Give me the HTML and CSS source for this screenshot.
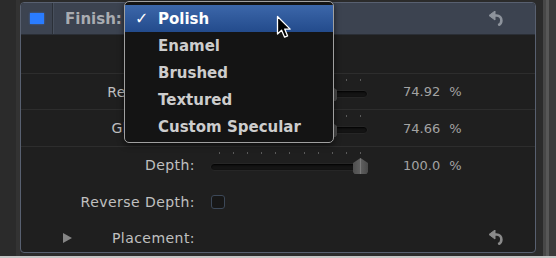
FILE: index.html
```html
<!DOCTYPE html>
<html>
<head>
<meta charset="utf-8">
<link rel="stylesheet" href="styles.css">
</head>
<body>
<div class="screen">
  <div class="main">
    <div class="gutter-l"></div>
    <div class="panel">
      <div class="header">
        <div class="swatch-cell"><span class="swatch"></span></div>
        <span class="title">Finish:</span>
        <svg class="reset reset-head" viewBox="0 0 14 15" width="14" height="15"><polygon points="0,4.5 6,0 6,9"/><path d="M5 4.5 H7.5 C10.5 4.5 12.4 6.6 12.4 9.4 C12.4 11.8 11.2 13.4 9.2 14.3"/></svg>
      </div>
      <div class="row row-empty line"></div>
      <div class="row row-36 line">
        <div class="label">Reflectivity:</div>
        <div class="slider"><div class="ticks"><i></i><i></i><i></i><i></i><i></i><i></i><i></i><i></i><i></i><i></i><i></i></div><div class="track"></div><div class="thumb" style="left: 112px"></div></div>
        <div class="value">74.92<span class="unit">%</span></div>
      </div>
      <div class="row row-37 line">
        <div class="label">Glossiness:</div>
        <div class="slider"><div class="ticks"><i></i><i></i><i></i><i></i><i></i><i></i><i></i><i></i><i></i><i></i><i></i></div><div class="track"></div><div class="thumb" style="left: 112px"></div></div>
        <div class="value">74.66<span class="unit">%</span></div>
      </div>
      <div class="row row-36">
        <div class="label">Depth:</div>
        <div class="slider"><div class="ticks"><i></i><i></i><i></i><i></i><i></i><i></i><i></i><i></i><i></i><i></i><i></i></div><div class="track"></div><div class="thumb" style="left: 143px"></div></div>
        <div class="value">100.0<span class="unit">%</span></div>
      </div>
      <div class="row row-37">
        <div class="label">Reverse Depth:</div>
        <div class="check-cell"><span class="checkbox"></span></div>
        <div></div>
      </div>
      <div class="row row-last">
        <div class="label label-disc"><span class="disc"></span><span>Placement:</span></div>
        <div></div>
        <div class="reset-cell"><svg class="reset" viewBox="0 0 14 15" width="14" height="15"><polygon points="0,4.5 6,0 6,9"/><path d="M5 4.5 H7.5 C10.5 4.5 12.4 6.6 12.4 9.4 C12.4 11.8 11.2 13.4 9.2 14.3"/></svg></div>
      </div>
    </div>
    <div class="gutter-r"><span class="s1"></span><span class="s2"></span><span class="s3"></span><span class="s4"></span></div>
  </div>
  <div class="bottom-strip"></div>

  <div class="menu">
    <div class="item selected"><span class="check">✓</span>Polish</div>
    <div class="item"><span class="check"></span>Enamel</div>
    <div class="item"><span class="check"></span>Brushed</div>
    <div class="item"><span class="check"></span>Textured</div>
    <div class="item"><span class="check"></span>Custom Specular</div>
  </div>

  <svg class="cursor" viewBox="0 0 17 25" width="17" height="25"><path d="M1.5 1.5 L1.5 19 L5.6 15.2 L8.6 22.2 L11.6 20.9 L8.7 14.1 L14.2 14.1 Z"/></svg>
</div>
</body>
</html>
```

FILE: styles.css
```css
* { box-sizing: border-box; }

body {
  margin: 0;
  width: 556px;
  height: 258px;
  overflow: hidden;
  background: #2b2b2b;
  font-family: "DejaVu Sans", "Liberation Sans", sans-serif;
}

.screen {
  position: relative;
  width: 556px;
  height: 258px;
  display: flex;
  flex-direction: column;
}

.main {
  display: flex;
  height: 256px;
}

.gutter-l {
  width: 20px;
  background: #2b2b2b;
  border-right: 4px solid #333333;
}

.panel {
  flex: 0 0 516px;
  margin-top: 2px;
  height: 251px;
  border: 1px solid #586070;
  border-radius: 4px;
  background: #1f1f1f;
  overflow: hidden;
  display: flex;
  flex-direction: column;
}

.gutter-r {
  flex: 1;
  display: flex;
}
.gutter-r .s1 { width: 7px; background: #2b2b2b; }
.gutter-r .s2 { width: 3px; background: #474747; }
.gutter-r .s3 { width: 3px; background: #575757; }
.gutter-r .s4 { flex: 1; background: #3b3b3b; }

.bottom-strip {
  height: 2px;
  background: #c6c6c6;
}

/* header */
.header {
  height: 32px;
  flex: 0 0 32px;
  background: #3c4350;
  border-bottom: 1px solid #2a2e35;
  display: flex;
  align-items: center;
}
.swatch-cell {
  width: 32px;
  height: 100%;
  border-right: 1px solid #2b3038;
  box-shadow: 1px 0 0 #48505d;
  display: flex;
  align-items: center;
  padding-left: 9px;
}
.swatch {
  width: 14px;
  height: 11px;
  background: #2a7cff;
  box-shadow: 0 0 2px rgba(60, 130, 255, 0.6);
}
.title {
  margin-left: 12px;
  font-size: 15px;
  font-weight: bold;
  color: #a9acb1;
}
.reset {
  display: block;
  fill: #8a8a8a;
  stroke: #8a8a8a;
}
.reset path {
  fill: none;
  stroke-width: 2.6;
}
.reset-head {
  margin-left: auto;
  margin-right: 32px;
  fill: #8d939c;
  stroke: #8d939c;
}

/* rows */
.row {
  display: grid;
  grid-template-columns: 174px 158px 1fr;
  column-gap: 15px;
  align-items: center;
}
.row.line { border-bottom: 1px solid #2d2d2d; }
.row-empty { flex: 0 0 39px; }
.row-36 { flex: 0 0 36px; }
.row-37 { flex: 0 0 37px; }
.row-last { flex: 1; padding-top: 3px; }

.label {
  text-align: right;
  font-size: 14px;
  letter-spacing: 0.45px;
  color: #c0c0c0;
  white-space: nowrap;
}
.label-disc {
  display: flex;
  align-items: center;
  justify-content: space-between;
  padding-left: 42px;
}
.disc {
  width: 0;
  height: 0;
  border-top: 5px solid transparent;
  border-bottom: 5px solid transparent;
  border-left: 9px solid #858585;
}

.slider {
  position: relative;
  align-self: start;
  padding-top: 5px;
  height: 27px;
}
.ticks {
  display: flex;
  justify-content: space-between;
  padding: 0 7px 0 9px;
  height: 2px;
}
.ticks i {
  width: 1px;
  height: 2px;
  background: #5a5a5a;
}
.track {
  margin-top: 9px;
  height: 8px;
  border-radius: 4px;
  background: #141414;
  border: 1px solid #262626;
  box-shadow: inset 0 1px 2px #000;
}
.thumb {
  position: absolute;
  top: 11px;
  width: 15px;
  height: 16px;
  background: linear-gradient(to right, #4e4e4e 0, #5e5e5e 45%, #7a7a7a 50%, #5e5e5e 55%, #4a4a4a 100%);
  clip-path: polygon(50% 0, 100% 32%, 100% 88%, 90% 100%, 10% 100%, 0 88%, 0 32%);
}

.value {
  padding-left: 20px;
  font-size: 13px;
  color: #a3a3a3;
  white-space: nowrap;
}
.unit { margin-left: 9px; }

.check-cell { display: flex; }
.checkbox {
  margin-left: 1px;
  width: 14px;
  height: 14px;
  border: 1px solid #3c4858;
  border-radius: 3px;
  background: #171717;
}

.reset-cell {
  display: flex;
  justify-content: flex-end;
  padding-right: 32px;
}

/* popup menu */
.menu {
  position: absolute;
  left: 124px;
  top: 1px;
  width: 210px;
  height: 142px;
  border: 1px solid #a0a0a0;
  border-radius: 5px;
  background: #141414;
  padding: 3px 0;
  box-shadow: 0 2px 6px rgba(0, 0, 0, 0.6);
}
.item {
  display: flex;
  align-items: center;
  height: 27px;
  padding-left: 10px;
  font-size: 15px;
  font-weight: bold;
  color: #cdcdcd;
  white-space: nowrap;
}
.item.selected {
  background: linear-gradient(#3c67aa, #234b8c);
  color: #ffffff;
}
.check {
  width: 23px;
  font-size: 16px;
}

.cursor {
  position: absolute;
  left: 276px;
  top: 15px;
}
.cursor path {
  fill: #000;
  stroke: #fff;
  stroke-width: 1.3;
  stroke-linejoin: round;
}
```
